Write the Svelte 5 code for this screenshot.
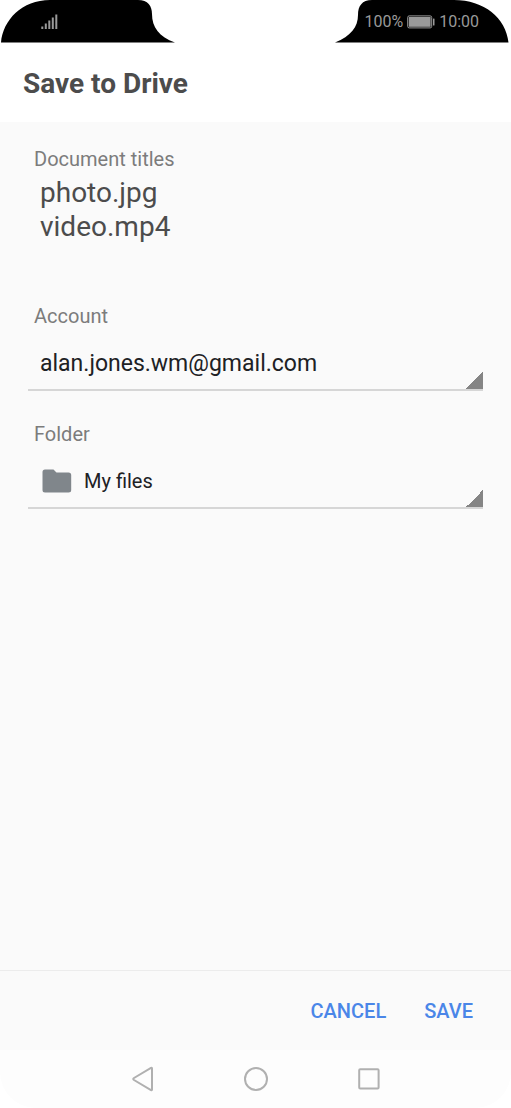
<script lang="ts">
	const files = ['photo.jpg', 'video.mp4'];

	let account = 'alan.jones.wm@gmail.com';
	let folder = 'My files';
</script>

<div class="screen">
	<div class="status">
		<div class="corner">
			<svg width="176" height="43" viewBox="0 0 176 43" aria-hidden="true">
				<path d="M1 42.5C3 20 22 0 50 0H138C148 0 152 6 152 14C152 27 159 37 175 42.5Z" />
			</svg>
			<svg class="signal" width="18" height="16" viewBox="0 0 18 16" aria-hidden="true">
				<path d="M2.3 12.5V15M5.8 9.5V15M9.3 6.5V15M12.8 3.5V15M16.3 0.5V15" />
			</svg>
		</div>
		<div class="corner">
			<svg width="177" height="43" viewBox="0 0 177 43" aria-hidden="true">
				<path d="M1 42.5C17 36 24 27 24 15C24 6 28 0 38 0H120C150 0 172 18 174.5 42.5Z" />
			</svg>
			<div class="info">
				<span>100%</span>
				<svg width="28" height="14" viewBox="0 0 28 14" aria-hidden="true">
					<rect class="case" x="0.7" y="0.9" width="24" height="12" rx="1.5" />
					<rect class="charge" x="1.8" y="2" width="21.8" height="9.8" />
					<rect class="charge" x="26" y="3.5" width="1.5" height="7" rx="0.5" />
				</svg>
				<span>10:00</span>
			</div>
		</div>
	</div>

	<header>
		<h1>Save to Drive</h1>
	</header>

	<main>
		<h2>Document titles</h2>
		<ul>
			{#each files as file}
				<li>{file}</li>
			{/each}
		</ul>

		<label for="account">Account</label>
		<div class="field">
			<select id="account" class="large" bind:value={account}>
				<option>alan.jones.wm@gmail.com</option>
			</select>
		</div>

		<label for="folder">Folder</label>
		<div class="field">
			<svg class="folder" width="30" height="24" viewBox="0 0 30 24" aria-hidden="true">
				<path
					d="M3 0.5H11.5L14.5 3.5H26.5Q29.2 3.5 29.2 6V21Q29.2 23.5 26.5 23.5H3Q0.5 23.5 0.5 21V3Q0.5 0.5 3 0.5Z"
				/>
			</svg>
			<select id="folder" bind:value={folder}>
				<option>My files</option>
			</select>
		</div>
	</main>

	<footer>
		<button>CANCEL</button>
		<button>SAVE</button>
	</footer>

	<nav>
		<button aria-label="Back">
			<svg width="26" height="26" viewBox="0 0 26 26">
				<path d="M22 2.5V23.5Q22 24.5 21 24L4 14Q2.5 13 4 12L21 2Q22 1.5 22 2.5Z" />
			</svg>
		</button>
		<button aria-label="Home">
			<svg width="26" height="26" viewBox="0 0 26 26">
				<circle cx="13" cy="13" r="11" />
			</svg>
		</button>
		<button aria-label="Recent apps">
			<svg width="26" height="26" viewBox="0 0 26 26">
				<rect x="3.2" y="3.2" width="19.4" height="19.4" rx="1" />
			</svg>
		</button>
	</nav>
</div>

<style>
	:global(body) {
		margin: 0;
		background-color: white;
	}
	.screen {
		display: flex;
		flex-direction: column;
		min-height: 100vh;
		font-family: Roboto, sans-serif;
	}

	.status {
		display: flex;
		justify-content: space-between;
	}
	.corner {
		display: grid;
		align-items: center;
	}
	.corner > * {
		grid-area: 1 / 1;
	}
	.signal {
		margin-left: 40px;
		fill: none;
		stroke: #999;
		stroke-width: 2;
	}
	.info {
		display: flex;
		align-items: center;
		justify-content: flex-end;
		gap: 4px;
		padding-right: 32px;
		color: #999;
		font-size: 16px;
		line-height: 20px;
	}
	.case {
		fill: none;
		stroke: #999;
	}
	.charge {
		fill: #999;
	}

	header {
		padding: 25px 23px 22px;
	}
	h1 {
		margin: 0;
		color: #4c4c4c;
		font-size: 28px;
		font-weight: bold;
		line-height: 32px;
	}

	main {
		flex: 1;
		padding: 23px 28px;
		background-color: #fafafa;
	}
	h2,
	label {
		display: block;
		margin: 0;
		padding: 0 6px;
		color: #7c7c7c;
		font-size: 20px;
		font-weight: normal;
		line-height: 28px;
	}
	ul {
		margin: 3px 0 58px;
		padding: 0 12px;
		color: #4c4c4c;
		font-size: 28px;
		line-height: 34px;
		list-style: none;
	}
	.field {
		display: flex;
		align-items: center;
		height: 52px;
		margin-bottom: 29px;
		padding-top: 7px;
		border-bottom: 2px solid #d6d6d6;
		background: linear-gradient(135deg, transparent 50%, #858585 50%) right bottom / 17px 17px no-repeat;
	}
	.folder {
		margin-left: 14px;
		fill: #80868b;
	}
	select {
		flex: 1;
		height: 52px;
		padding: 0 12px;
		border: none;
		background: none;
		color: #202124;
		font-family: inherit;
		font-size: 20px;
		appearance: none;
	}
	.large {
		font-size: 23px;
	}

	footer {
		display: flex;
		justify-content: flex-end;
		gap: 14px;
		padding: 20px 26px 19px;
		border-top: 1px solid #ececec;
		background-color: #fafafa;
	}
	button {
		padding: 0 12px;
		border: none;
		background: none;
		color: #4a86e8;
		font-family: inherit;
		font-size: 20px;
		font-weight: 500;
		line-height: 40px;
		cursor: pointer;
	}

	nav {
		display: flex;
		justify-content: center;
		gap: 63px;
		height: 58px;
		border-radius: 0 0 36px 36px;
		background-color: #fdfdfd;
	}
	nav svg {
		display: block;
		fill: none;
		stroke: #b0b0b0;
		stroke-width: 2;
	}
</style>
